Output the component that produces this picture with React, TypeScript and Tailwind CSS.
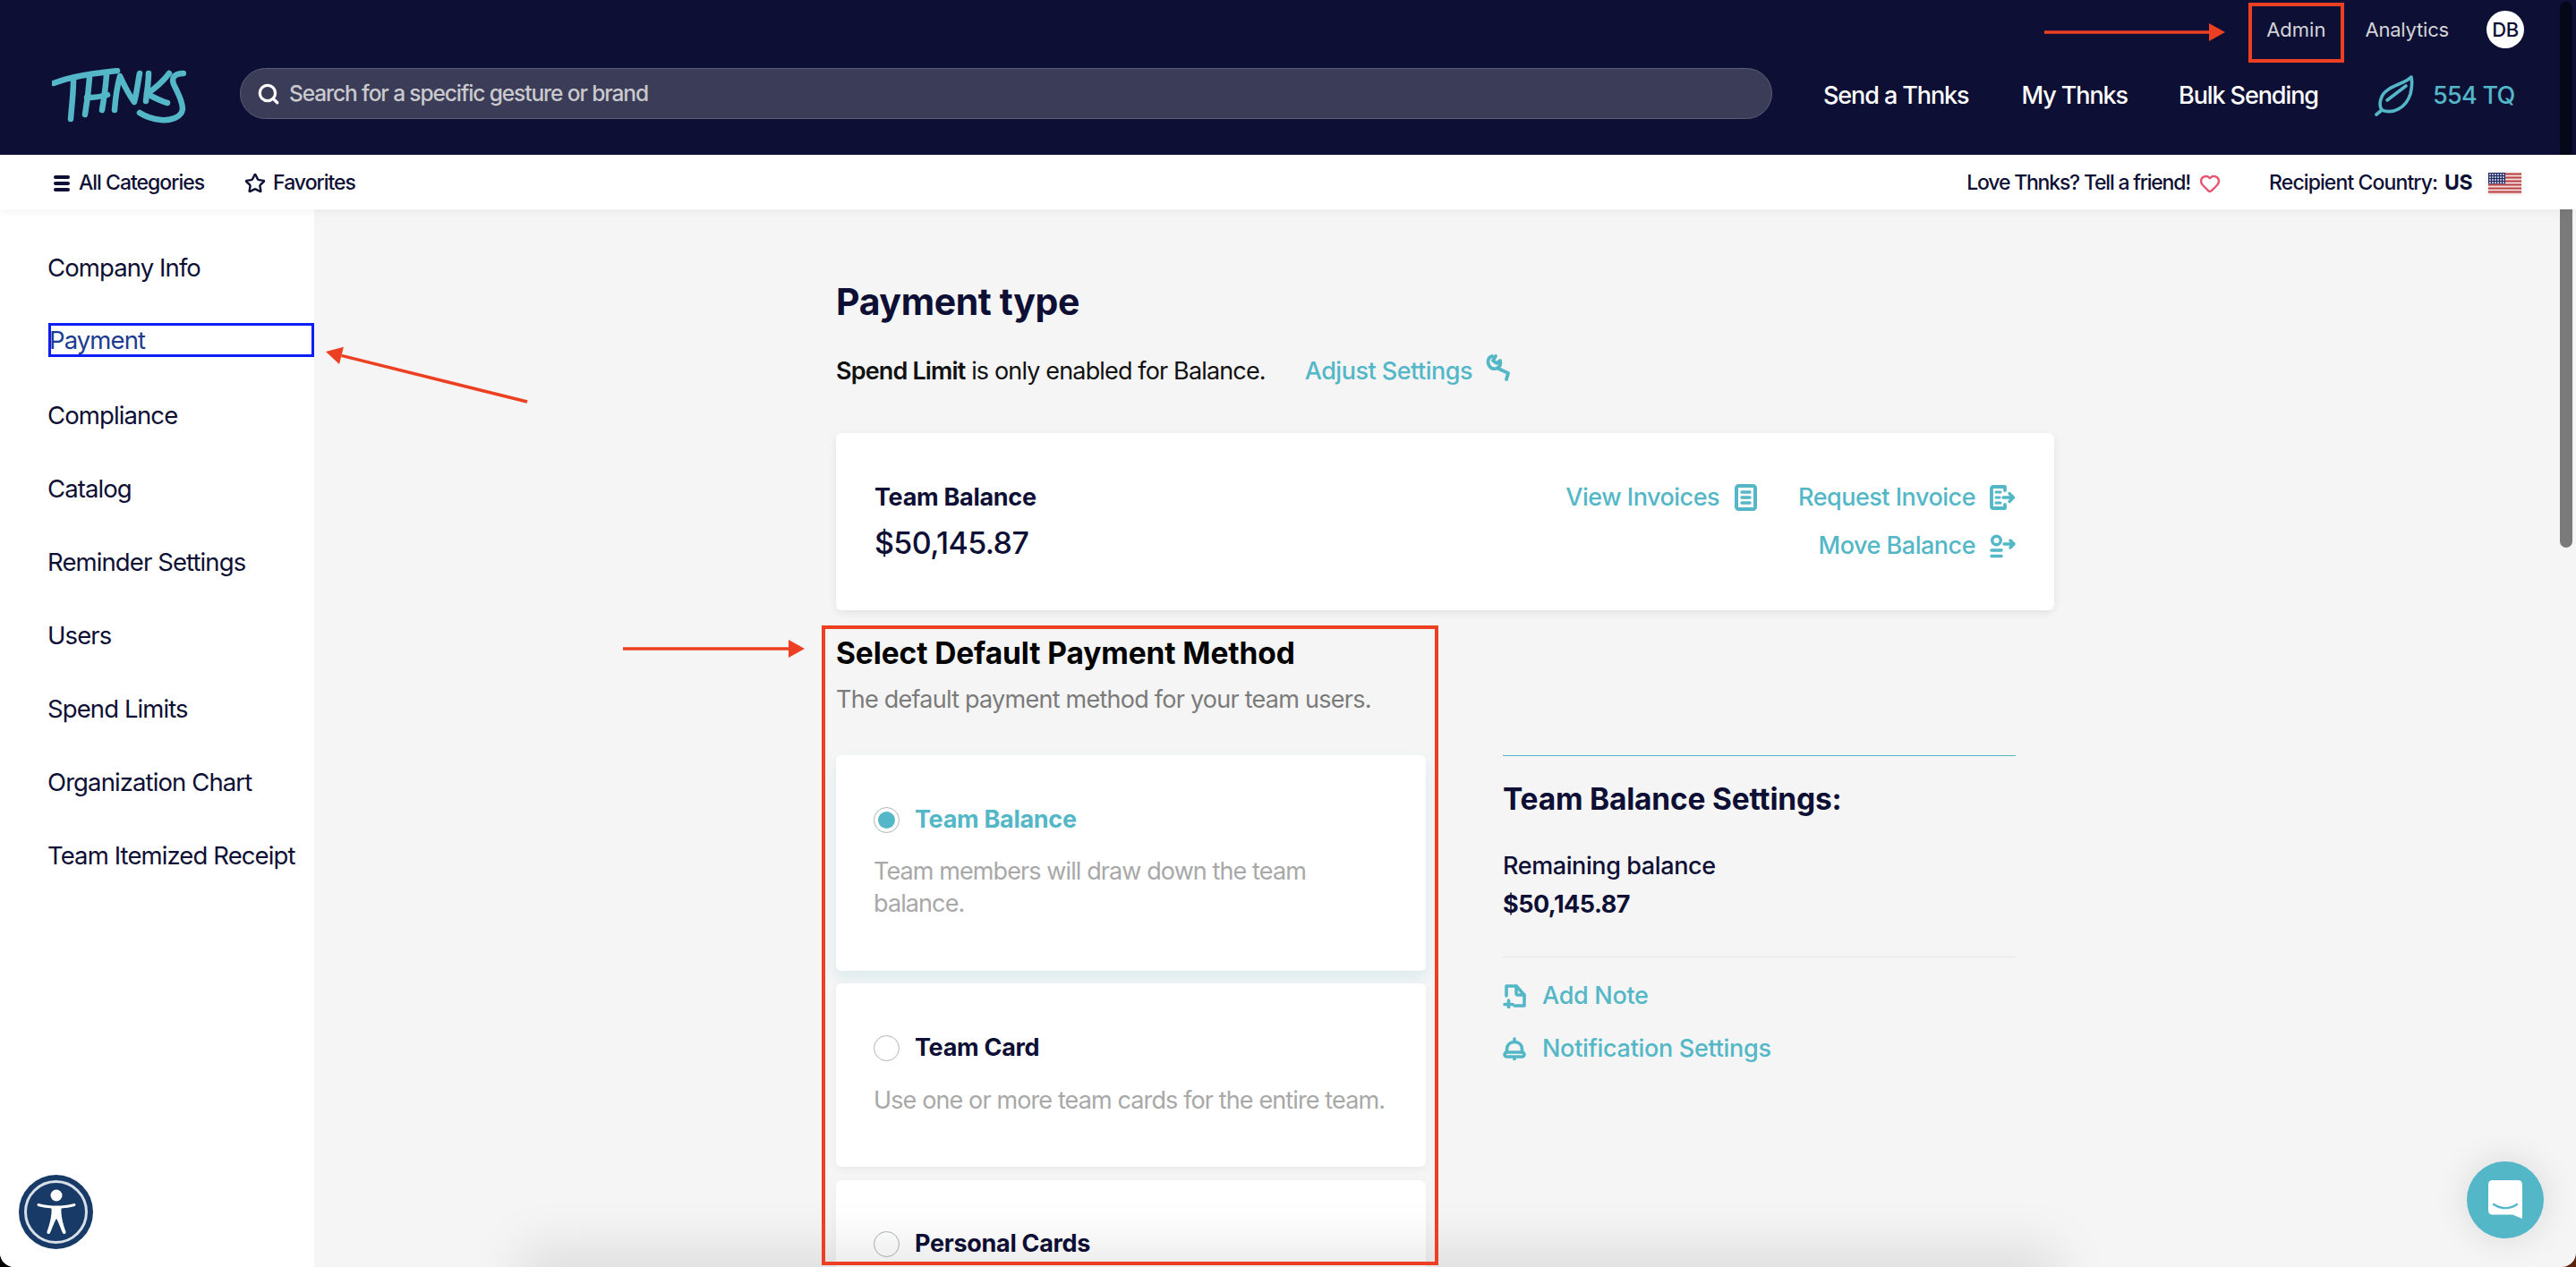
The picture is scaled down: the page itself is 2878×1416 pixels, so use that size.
import React from "react";
import { Search, Star, Heart } from "lucide-react";

function Logo() {
  return (
    <svg width="150" height="62" viewBox="0 0 150 62" fill="none" stroke="#54b7c7" strokeWidth="6.500" strokeLinecap="round" strokeLinejoin="round">
      <path d="M2 17 C25 8 50 6 73 3" />
      <path d="M24 14 C24 28 22 44 21 57" />
      <path d="M42 11 C41 25 39 40 37 52" />
      <path d="M39 33 C47 33 55 32 62 30" />
      <path d="M61 8 C60 22 58 35 56 47" />
      <path d="M70 47 C71 33 73 20 76 9 C81 20 86 30 92 38 C95 27 96 16 98 6" />
      <path d="M108 6 C108 16 106 27 105 37" />
      <path d="M131 6 C124 15 115 23 106 29 C113 32 121 37 129 39" />
      <path d="M147 6 C138 6 133 10 136 18 C140 27 146 36 146 46 C145 55 133 59 122 58 C112 57 104 54 98 50" />
    </svg>
  );
}

function LeafIcon() {
  return (
    <svg width="44" height="46" viewBox="0 0 44 46" fill="none" stroke="#54b7c7" strokeWidth="3.600" strokeLinecap="round" strokeLinejoin="round">
      <path d="M41 2 C34 10 13 12 8 24 C5 31 6 36 8 39 C20 44 35 37 40 21 C42 13 42 7 41 2 Z" />
      <path d="M2 44 L8 39" />
      <path d="M14 28 L35 12" />
    </svg>
  );
}

function Flag() {
  return (
    <svg width="37" height="24" viewBox="0 0 37 24" className="shadow-[0_0_4px_rgba(0,0,0,0.12)]">
      <rect width="37" height="24" fill="#f2dcdc" />
      {[0, 4, 8, 12, 16, 20].map((y) => (
        <rect key={y} y={y + 0.5} width="37" height="2" fill="#b8403f" />
      ))}
      <rect width="19" height="12.5" fill="#1f2a66" />
      {[2, 5, 8, 11, 14, 17].map((x) =>
        [2, 5, 8, 11].map((y) => <rect key={`${x}-${y}`} x={x - 0.8} y={y - 0.8} width="1.6" height="1.6" fill="#ffffff" />)
      )}
    </svg>
  );
}

function WrenchIcon() {
  return (
    <svg width="28" height="30" viewBox="0 0 28 30" fill="none" stroke="#54b7c7" strokeWidth="3.800" strokeLinecap="round" strokeLinejoin="round">
      <path d="M11 2 L8 7 L12 10 L16 7 C17 12 15 15 11 16 C7 17 3 14 2.500 9 C2.300 6 4 3 7 2" />
      <path d="M14 16 L25 21 L23 28" />
    </svg>
  );
}

function InvoiceIcon() {
  return (
    <svg width="25" height="30" viewBox="0 0 25 30" fill="none" stroke="#54b7c7" strokeLinecap="round">
      <rect x="2" y="2" width="21" height="26" rx="2.500" strokeWidth="4" />
      <path d="M8 9 H17 M8 15 H17 M8 21 H17" strokeWidth="3.400" />
    </svg>
  );
}

function RequestIcon() {
  return (
    <svg width="29" height="28" viewBox="0 0 29 28" fill="none" stroke="#54b7c7" strokeLinecap="round" strokeLinejoin="round">
      <path d="M17 2 H4 Q2 2 2 4 V24 Q2 26 4 26 H17 M17 2 V6 M17 22 V26" strokeWidth="3.800" />
      <path d="M7 8 H12 M7 14 H11 M7 20 H12" strokeWidth="3" />
      <path d="M15 14 H26 M22 9.500 L26.500 14 L22 18.500" strokeWidth="3.400" />
    </svg>
  );
}

function MoveIcon() {
  return (
    <svg width="29" height="27" viewBox="0 0 29 27" fill="none" stroke="#54b7c7" strokeLinecap="round" strokeLinejoin="round">
      <circle cx="7.500" cy="7" r="4.800" strokeWidth="3.400" />
      <path d="M2 18 H13 M2 24.500 H13" strokeWidth="3.600" />
      <path d="M16 11 H27 M23 7 L27 11 L23 15" strokeWidth="3.400" />
    </svg>
  );
}

function NoteIcon() {
  return (
    <svg width="26" height="28" viewBox="0 0 26 28" fill="none" stroke="#54b7c7" strokeWidth="3.600" strokeLinecap="round" strokeLinejoin="round">
      <path d="M4 14 V3 H15 L24 13 V25 H13" />
      <path d="M15 3 V11 Q15 13 17 13 H24" />
      <path d="M2 23.500 H11 M6.500 19 V27" />
    </svg>
  );
}

function BellIcon() {
  return (
    <svg width="26" height="26" viewBox="0 0 26 26" fill="none" stroke="#54b7c7" strokeWidth="3.600" strokeLinecap="round" strokeLinejoin="round">
      <path d="M4.500 17 V14 C4.500 9 8 5.500 13 5.500 C18 5.500 21.500 9 21.500 14 V17" />
      <rect x="2" y="17" width="22" height="5" rx="2.500" />
      <path d="M13 2 V5 M13 23 V25" />
    </svg>
  );
}

function AccessIcon() {
  return (
    <div className="w-[83px] h-[83px] rounded-full bg-[#173b66] flex items-center justify-center">
      <div className="w-[71px] h-[71px] rounded-full border-[3px] border-[#d8dfe8] flex items-center justify-center">
        <svg width="46" height="52" viewBox="0 0 46 52" fill="#ffffff">
          <circle cx="23" cy="7" r="6.500" />
          <path d="M3 16 C10 18 17 18.500 23 18.500 C29 18.500 36 18 43 16 C44.500 15.800 45 18.500 43.500 19 C38 20.500 33 21 28.500 21.500 C28 29 30 38 33.500 47.500 C34.200 50 31 51 30 49 C27.500 43 25 36 23 33 C21 36 18.500 43 16 49 C15 51 11.800 50 12.500 47.500 C16 38 18 29 17.500 21.500 C13 21 8 20.500 2.500 19 C1 18.500 1.500 15.800 3 16 Z" />
        </svg>
      </div>
    </div>
  );
}

function ChatIcon() {
  return (
    <div className="w-[86px] h-[86px] rounded-full bg-[#54b7c7] flex items-center justify-center shadow-[0_0_40px_rgba(0,0,0,0.12)]">
      <svg width="38" height="44" viewBox="0 0 38 44">
        <path d="M5 0 H33 Q38 0 38 5 V43 L27 38.500 H5 Q0 38.500 0 33.500 V5 Q0 0 5 0 Z" fill="#ffffff" />
        <path d="M6 27 C14 32.500 24 32.500 32 27" fill="none" stroke="#54b7c7" strokeWidth="2.400" strokeLinecap="round" />
      </svg>
    </div>
  );
}

function Arrow({ x1, y1, x2, y2, className }: { x1: number; y1: number; x2: number; y2: number; className: string }) {
  const w = Math.abs(x2 - x1) + 40;
  const h = Math.abs(y2 - y1) + 40;
  const ox = Math.min(x1, x2) - 20;
  const oy = Math.min(y1, y2) - 20;
  const a = Math.atan2(y2 - y1, x2 - x1);
  const tipX = x2 - ox;
  const tipY = y2 - oy;
  const bx = tipX - 18 * Math.cos(a);
  const by = tipY - 18 * Math.sin(a);
  const px = 10 * Math.sin(a);
  const py = 10 * Math.cos(a);
  return (
    <svg width={w} height={h} viewBox={`0 0 ${w} ${h}`} className={className}>
      <line x1={x1 - ox} y1={y1 - oy} x2={bx} y2={by} stroke="#ed4023" strokeWidth="3.500" />
      <polygon points={`${tipX},${tipY} ${bx + px},${by - py} ${bx - px},${by + py}`} fill="#ed4023" />
    </svg>
  );
}

const side = ["Company Info", "Payment", "Compliance", "Catalog", "Reminder Settings", "Users", "Spend Limits", "Organization Chart", "Team Itemized Receipt"];

export default function App() {
  return (
    <div className="relative w-[2878px] h-[1416px] overflow-hidden bg-linear-to-r from-black to-[#5c2310] font-['Inter',sans-serif] text-[#0e0f35]">
      <div className="relative flex flex-col w-full h-full overflow-hidden rounded-b-[16px] bg-[#f5f5f5]">
        {/* Header */}
        <header className="h-[173px] shrink-0 bg-[#0e0f35] flex flex-col">
          <div className="h-[66px] flex items-center justify-end pr-[58px] text-[22px] tracking-[-0.2px] text-[#d4d4d8]">
            <span className="mr-[44px] tracking-[0px]">Admin</span>
            <span className="mr-[42px]">Analytics</span>
            <span className="w-[42px] h-[42px] rounded-full bg-white text-[#0e0f35] font-medium text-[22px] tracking-[-0.5px] flex items-center justify-center">DB</span>
          </div>
          <div className="flex items-center pl-[58px] h-[82px]">
            <Logo />
            <div className="ml-[60px] shrink-0 w-[1712px] h-[57px] mb-[5px] rounded-full bg-[#3b3c57] border border-[#5b5c74] flex items-center pl-[18px]">
              <Search size={26} strokeWidth={3} className="text-white" />
              <span className="ml-[10px] text-[24.500px] font-medium tracking-[-1.1px] text-[#c9c9ce]">Search for a specific gesture or brand</span>
            </div>
            <nav className="ml-[57px] flex items-center text-[27px] font-medium tracking-[-1.1px] text-white whitespace-nowrap">
              <span>Send a Thnks</span>
              <span className="ml-[59px]">My Thnks</span>
              <span className="ml-[57px]">Bulk Sending</span>
              <span className="ml-[63px]"><LeafIcon /></span>
              <span className="ml-[21px] text-[#54b7c7] tracking-[-0.7px]">554 TQ</span>
            </nav>
          </div>
        </header>

        {/* Sub nav */}
        <div className="relative z-10 h-[61px] shrink-0 bg-white flex items-center pl-[60px] pr-[61px] pt-[2px] text-[23px] font-medium tracking-[-1px] shadow-[0_2px_10px_rgba(0,0,0,0.05)]">
          <div className="flex items-center">
            <div className="flex flex-col gap-[3px] w-[18px]">
              <span className="h-[4px] rounded-full bg-[#0e0f35]" />
              <span className="h-[4px] rounded-full bg-[#0e0f35]" />
              <span className="h-[4px] rounded-full bg-[#0e0f35]" />
            </div>
            <span className="ml-[10px]">All Categories</span>
            <Star size={24} strokeWidth={2.400} className="ml-[45px]" />
            <span className="ml-[8px]">Favorites</span>
          </div>
          <div className="ml-auto flex items-center">
            <span className="tracking-[-1.2px]">Love Thnks? Tell a friend!</span>
            <Heart size={24} strokeWidth={2.400} className="ml-[10px] text-[#e4566f]" />
            <span className="ml-[54px] tracking-[-0.9px]">Recipient Country:</span>
            <span className="ml-[8px] font-bold tracking-[-0.5px]">US</span>
            <span className="ml-[18px] flex"><Flag /></span>
          </div>
        </div>

        {/* Body */}
        <div className="flex flex-1 min-h-0">
          <aside className="w-[351px] shrink-0 bg-white pt-[47px] flex flex-col gap-[44.150px] text-[27.500px] tracking-[-0.9px]">
            {side.map((s) =>
              s === "Payment" ? (
                <div key={s} className="ml-[54px] h-[38px] -mt-[2px] mb-[2px] pl-[1px] pt-[2px] outline-[3px] outline-solid -outline-offset-[3px] outline-[#0a1ff5] text-[#1c3d8f] flex items-center whitespace-nowrap leading-none">
                  {s}
                </div>
              ) : (
                <div key={s} className="pl-[53px] h-[38px] flex items-center whitespace-nowrap leading-none">
                  {s}
                </div>
              )
            )}
          </aside>

          <main className="flex-1 min-w-0 pl-[583px] pt-[83px]">
            <div className="w-[1361px]">
              <h1 className="h-[40px] leading-[40px] text-[41px] font-bold tracking-[-0.4px]">Payment type</h1>
              <div className="mt-[40px] h-[36px] flex items-center text-[27px] tracking-[-0.85px] text-[#111]">
                <span><span className="font-semibold">Spend Limit</span> is only enabled for Balance.</span>
                <span className="ml-[44px] text-[#54b7c7] font-medium tracking-[-0.5px]">Adjust Settings</span>
                <span className="ml-[15px] flex -translate-y-[4px]"><WrenchIcon /></span>
              </div>

              <section className="mt-[51px] h-[198px] bg-white rounded-[6px] shadow-[0_3px_10px_rgba(0,0,0,0.08)] pl-[43px] pr-[43px] flex justify-between">
                <div className="pt-[54px]">
                  <div className="h-[36px] leading-[36px] text-[27px] font-bold tracking-[-0.3px]">Team Balance</div>
                  <div className="mt-[15px] h-[36px] leading-[36px] text-[34px] font-medium tracking-[-0.6px]">$50,145.87</div>
                </div>
                <div className="pt-[54px] flex flex-col items-end text-[27px] font-medium tracking-[-0.5px] text-[#54b7c7]">
                  <div className="h-[36px] flex items-center">
                    <span>View Invoices</span>
                    <span className="ml-[17px] flex"><InvoiceIcon /></span>
                    <span className="ml-[46px]">Request Invoice</span>
                    <span className="ml-[16px] flex"><RequestIcon /></span>
                  </div>
                  <div className="mt-[18px] h-[36px] flex items-center">
                    <span>Move Balance</span>
                    <span className="ml-[16px] flex"><MoveIcon /></span>
                  </div>
                </div>
              </section>

              <div className="flex">
                <div className="w-[659px] shrink-0">
                  <h2 className="mt-[28px] h-[40px] leading-[40px] text-[33.500px] font-bold tracking-[-0.1px] text-black whitespace-nowrap">Select Default Payment Method</h2>
                  <p className="mt-[14px] h-[36px] leading-[36px] text-[27px] tracking-[-0.75px] text-[#7b7b7b] whitespace-nowrap">The default payment method for your team users.</p>

                  <div className="mt-[44px] h-[241px] bg-white rounded-[6px] shadow-[0_8px_16px_rgba(84,183,199,0.16)] pl-[42px] pr-[20px] pt-[57px]">
                    <div className="flex items-center h-[30px]">
                      <span className="w-[29px] h-[29px] rounded-full border border-[#aeb4b6] flex items-center justify-center">
                        <span className="w-[19px] h-[19px] rounded-full bg-[#54b7c7]" />
                      </span>
                      <span className="ml-[17px] text-[27px] font-bold tracking-[-0.3px] text-[#54b7c7]">Team Balance</span>
                    </div>
                    <p className="mt-[25px] w-[520px] text-[27px] leading-[36px] tracking-[-0.9px] text-[#a8a8a8]">Team members will draw down the team balance.</p>
                  </div>

                  <div className="mt-[14px] h-[205px] bg-white rounded-[6px] shadow-[0_3px_10px_rgba(0,0,0,0.05)] pl-[42px] pr-[20px] pt-[57px]">
                    <div className="flex items-center h-[30px]">
                      <span className="w-[29px] h-[29px] rounded-full border border-[#aeb4b6]" />
                      <span className="ml-[17px] text-[27px] font-bold tracking-[-0.3px]">Team Card</span>
                    </div>
                    <p className="mt-[26px] text-[27px] leading-[36px] tracking-[-0.88px] text-[#a8a8a8] whitespace-nowrap">Use one or more team cards for the entire team.</p>
                  </div>

                  <div className="mt-[15px] h-[250px] bg-white rounded-[6px] shadow-[0_3px_10px_rgba(0,0,0,0.05)] pl-[42px] pr-[20px] pt-[56px]">
                    <div className="flex items-center h-[30px]">
                      <span className="w-[29px] h-[29px] rounded-full border border-[#aeb4b6]" />
                      <span className="ml-[17px] text-[27px] font-bold tracking-[-0.3px]">Personal Cards</span>
                    </div>
                  </div>
                </div>

                <div className="ml-[86px] w-[573px] mt-[162px]">
                  <div className="border-t-[1.500px] border-[#54b7c7]" />
                  <h3 className="mt-[28px] h-[40px] leading-[40px] text-[33.500px] font-bold tracking-[-0.2px]">Team Balance Settings:</h3>
                  <div className="mt-[39px] h-[32px] leading-[32px] text-[27px] font-medium tracking-[-0.4px]">Remaining balance</div>
                  <div className="mt-[11px] h-[32px] leading-[32px] text-[27px] font-bold tracking-[-0.5px]">$50,145.87</div>
                  <div className="mt-[42px] border-t border-[#e5e5e5]" />
                  <div className="mt-[27px] h-[32px] flex items-center text-[27px] font-medium tracking-[-0.3px] text-[#54b7c7]">
                    <span className="w-[44px] flex"><NoteIcon /></span>
                    <span>Add Note</span>
                  </div>
                  <div className="mt-[27px] h-[32px] flex items-center text-[27px] font-medium tracking-[-0.3px] text-[#54b7c7]">
                    <span className="w-[44px] flex"><BellIcon /></span>
                    <span>Notification Settings</span>
                  </div>
                </div>
              </div>
            </div>
          </main>
        </div>

        {/* Bottom sticky bar shadow (overlay) */}
        <div className="absolute left-[600px] top-[1416px] w-[1680px] h-[40px] shadow-[0_0_60px_20px_rgba(0,0,0,0.1)]" />

        {/* Floating widgets */}
        <div className="absolute left-[21px] top-[1313px]"><AccessIcon /></div>
        <div className="absolute left-[2756px] top-[1298px]"><ChatIcon /></div>

        {/* Annotations */}
        <div className="absolute left-[2512px] top-[3px] w-[107px] h-[67px] border-[4px] border-[#ed4023]" />
        <div className="absolute left-[918px] top-[699px] w-[689px] h-[715px] border-[4px] border-[#ed4023]" />
        <Arrow x1={2284} y1={36} x2={2486} y2={36} className="absolute left-[2264px] top-[16px]" />
        <Arrow x1={696} y1={725} x2={899} y2={725} className="absolute left-[676px] top-[705px]" />
        <Arrow x1={589} y1={449} x2={364} y2={393} className="absolute left-[344px] top-[373px]" />

        {/* Scrollbar thumb */}
        <div className="absolute left-[2860px] top-[2px] w-[14px] h-[610px] rounded-full bg-black/50" />
      </div>
    </div>
  );
}
